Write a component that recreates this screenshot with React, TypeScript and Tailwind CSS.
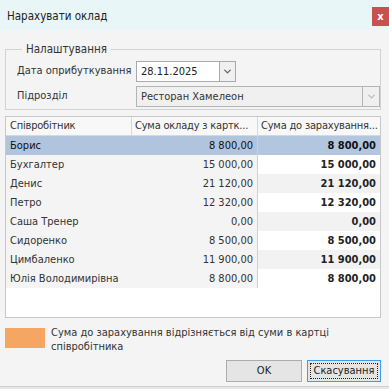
import { ChevronDown } from "lucide-react";

const rows = [
  { name: "Борис", card: "8 800,00", total: "8 800,00" },
  { name: "Бухгалтер", card: "15 000,00", total: "15 000,00" },
  { name: "Денис", card: "21 120,00", total: "21 120,00" },
  { name: "Петро", card: "12 320,00", total: "12 320,00" },
  { name: "Саша Тренер", card: "0,00", total: "0,00" },
  { name: "Сидоренко", card: "8 500,00", total: "8 500,00" },
  { name: "Цимбаленко", card: "11 900,00", total: "11 900,00" },
  { name: "Юлія Володимирівна", card: "8 800,00", total: "8 800,00" },
];

export default function App() {
  return (
    <div
      className="flex h-[389px] w-[389px] flex-col overflow-hidden bg-[#f4f4f4] text-[11px] text-[#222]"
      style={{ fontFamily: '"DejaVu Sans Condensed", Tahoma, "Liberation Sans", sans-serif' }}
    >
      {/* title bar */}
      <div className="flex h-[30px] shrink-0 items-start bg-[#e9f6f8]">
        <div className="pl-[7px] pt-[8px] text-[11.5px] text-[#222]">Нарахувати оклад</div>
        <div className="ml-auto mt-[7px] flex h-[19px] w-[17px] items-center justify-center bg-[#c75050] text-[11px] font-bold leading-none text-white">
          x
        </div>
      </div>

      <div className="flex flex-1 flex-col pl-[5px] pr-[8px]">
        {/* settings group */}
        <fieldset className="mt-[12px] border border-[#d2d2d2] pb-[2px] pl-[11px] pr-0">
          <legend className="ml-[5px] px-[4px] text-[11.5px] leading-[15px] text-[#333]">Налаштування</legend>
          <div className="mt-[4px] flex items-center">
            <span className="w-[119px] text-[#333]">Дата оприбуткування</span>
            <div className="flex h-[21px] w-[100px] border border-[#a9a9a9] bg-white">
              <span className="flex-1 pl-[4px] leading-[19px]">28.11.2025</span>
              <div className="flex w-[16px] items-center justify-center border-l border-[#a9a9a9] bg-[#f0f0f0]">
                <ChevronDown size={11} strokeWidth={3} className="text-[#666]" />
              </div>
            </div>
          </div>
          <div className="mt-[4px] flex items-center">
            <span className="w-[119px] text-[#333]">Підрозділ</span>
            <div className="flex h-[21px] flex-1 border border-[#b4b4b4] bg-[#f0f0f0]">
              <span className="flex-1 pl-[4px] leading-[19px] text-[#333]">Ресторан Хамелеон</span>
              <div className="flex w-[17px] items-center justify-center border-l border-[#b4b4b4]">
                <ChevronDown size={11} strokeWidth={3} className="text-[#bdbdbd]" />
              </div>
            </div>
          </div>
        </fieldset>

        {/* table */}
        <div className="mt-[6px] flex h-[202px] shrink-0 flex-col border border-[#c8c8c8] bg-white">
          <div className="grid h-[19px] grid-cols-[126px_126px_1fr] border-b border-[#d8d8d8] bg-[#f8f8f8] tracking-[-0.2px] text-[#333]">
            <div className="border-r border-[#d8d8d8] pl-[4px] leading-[18px]">Співробітник</div>
            <div className="overflow-hidden whitespace-nowrap border-r border-[#d8d8d8] pl-[3px] leading-[18px]">Сума окладу з картк...</div>
            <div className="overflow-hidden whitespace-nowrap pl-[3px] leading-[18px]">Сума до зарахування...</div>
          </div>
          {rows.map((r, i) => {
            const sel = i === 0;
            const stripe = i % 2 === 0 ? "bg-[#f2f2f2]" : "bg-white";
            return (
              <div key={r.name} className="grid h-[19px] grid-cols-[126px_126px_1fr] leading-[19px]">
                <div className={`pl-[4px] ${sel ? "bg-[#b0c4de] text-[#111]" : "bg-[#f4f4f4] text-[#333]"}`}>
                  {r.name}
                </div>
                <div
                  className={`border-r border-[#d0d0d0] pr-[4px] text-right ${sel ? "bg-[#b0c4de] text-[#111]" : "bg-[#f4f4f4] text-[#333]"}`}
                >
                  {r.card}
                </div>
                <div className={`pr-[4px] text-right font-bold ${sel ? "bg-[#b3c6e0] text-[#111]" : stripe}`}>
                  {r.total}
                </div>
              </div>
            );
          })}
        </div>

        {/* legend */}
        <div className="mt-[10px] flex items-start gap-[6px]">
          <div className="h-[20px] w-[40px] shrink-0 bg-[#f5a662]" />
          <div className="-mt-[2px] leading-[14px] text-[#333]">
            Сума до зарахування відрізняється від суми в картці співробітника
          </div>
        </div>

        {/* buttons */}
        <div className="mt-[6px] flex justify-end gap-[5px]">
          <button className="h-[22px] w-[76px] border border-[#acacac] bg-[#e5e5e5] text-[11px] text-[#222]">OK</button>
          <button className="h-[22px] w-[74px] border border-[#3c9cf0] bg-[#e5e5e5] p-[2px] text-[11px] text-[#222]">
            <div className="flex h-full w-full items-center justify-center border border-dotted border-[#222]">
              Скасування
            </div>
          </button>
        </div>
      </div>
      <div className="h-[3px] shrink-0 border-t border-[#cfcfcf] bg-[#e6e6e6]" />
    </div>
  );
}
